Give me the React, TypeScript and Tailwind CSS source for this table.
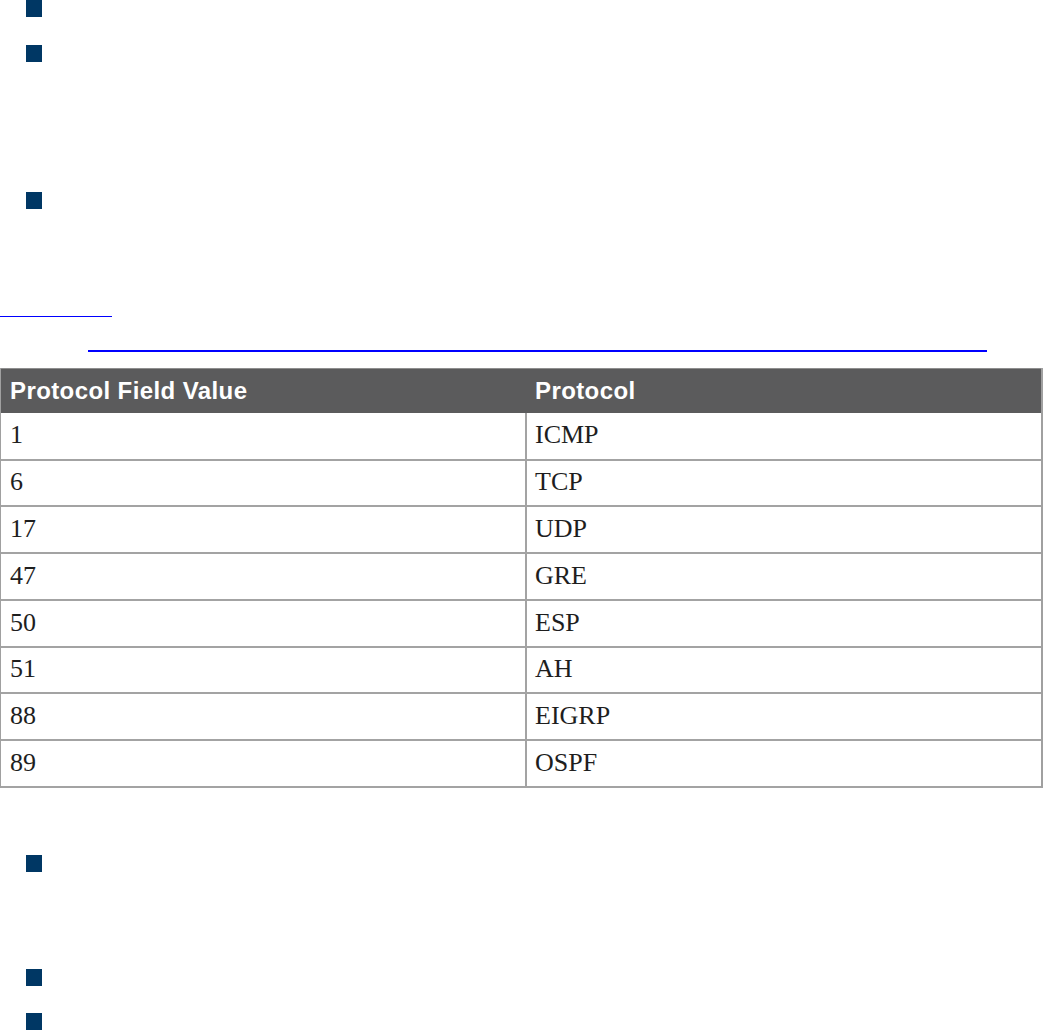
import React from "react";

const rows: [string, string, number][] = [
  ["1", "ICMP", 48],
  ["6", "TCP", 46],
  ["17", "UDP", 47],
  ["47", "GRE", 47],
  ["50", "ESP", 47],
  ["51", "AH", 46],
  ["88", "EIGRP", 47],
  ["89", "OSPF", 47],
];

function Bullet({ className = "" }: { className?: string }) {
  return (
    <div className={`flex ${className}`}>
      <span className="ml-[26px] block h-[17px] w-[16px] bg-[#003764]" />
    </div>
  );
}

export default function App() {
  return (
    <div className="flex h-[1031px] w-[1044px] flex-col overflow-hidden bg-white">
      <Bullet />
      <Bullet className="mt-[28px]" />
      <Bullet className="mt-[130px]" />
      <a href="#" className="mt-[107px] block h-px w-[112px] bg-[#0000ff]" />
      <a href="#" className="ml-[88px] mt-[33px] block h-[2px] w-[899px] bg-[#0000ff]" />
      <div className="mt-[16px] w-[1043px] border-l border-r-2 border-[#a0a0a0]">
        <div
          className="grid h-[45px] grid-cols-[524px_1fr] border-t border-[#8e8e8e] bg-[#5b5b5c] text-white"
          style={{ fontFamily: '"Liberation Sans", Arial, sans-serif' }}
        >
          <div className="flex items-center pl-[9px] text-[24px] font-bold tracking-[0.4px]">
            Protocol Field Value
          </div>
          <div className="flex items-center pl-[10px] text-[24px] font-bold tracking-[0.4px]">
            Protocol
          </div>
        </div>
        {rows.map(([v, p, h]) => (
          <div
            key={v}
            className="grid grid-cols-[524px_1fr] border-b-2 border-[#a3a3a3] text-[#1e1e1e]"
            style={{ height: h, fontFamily: '"Liberation Serif", "Times New Roman", serif' }}
          >
            <div className="flex items-center pb-[3px] pl-[9px] text-[26px]">{v}</div>
            <div className="flex items-center border-l-2 border-[#a3a3a3] pb-[3px] pl-[8px] text-[26px]">
              {p}
            </div>
          </div>
        ))}
      </div>
      <Bullet className="mt-[67px]" />
      <Bullet className="mt-[97px]" />
      <Bullet className="mt-[27px]" />
    </div>
  );
}
